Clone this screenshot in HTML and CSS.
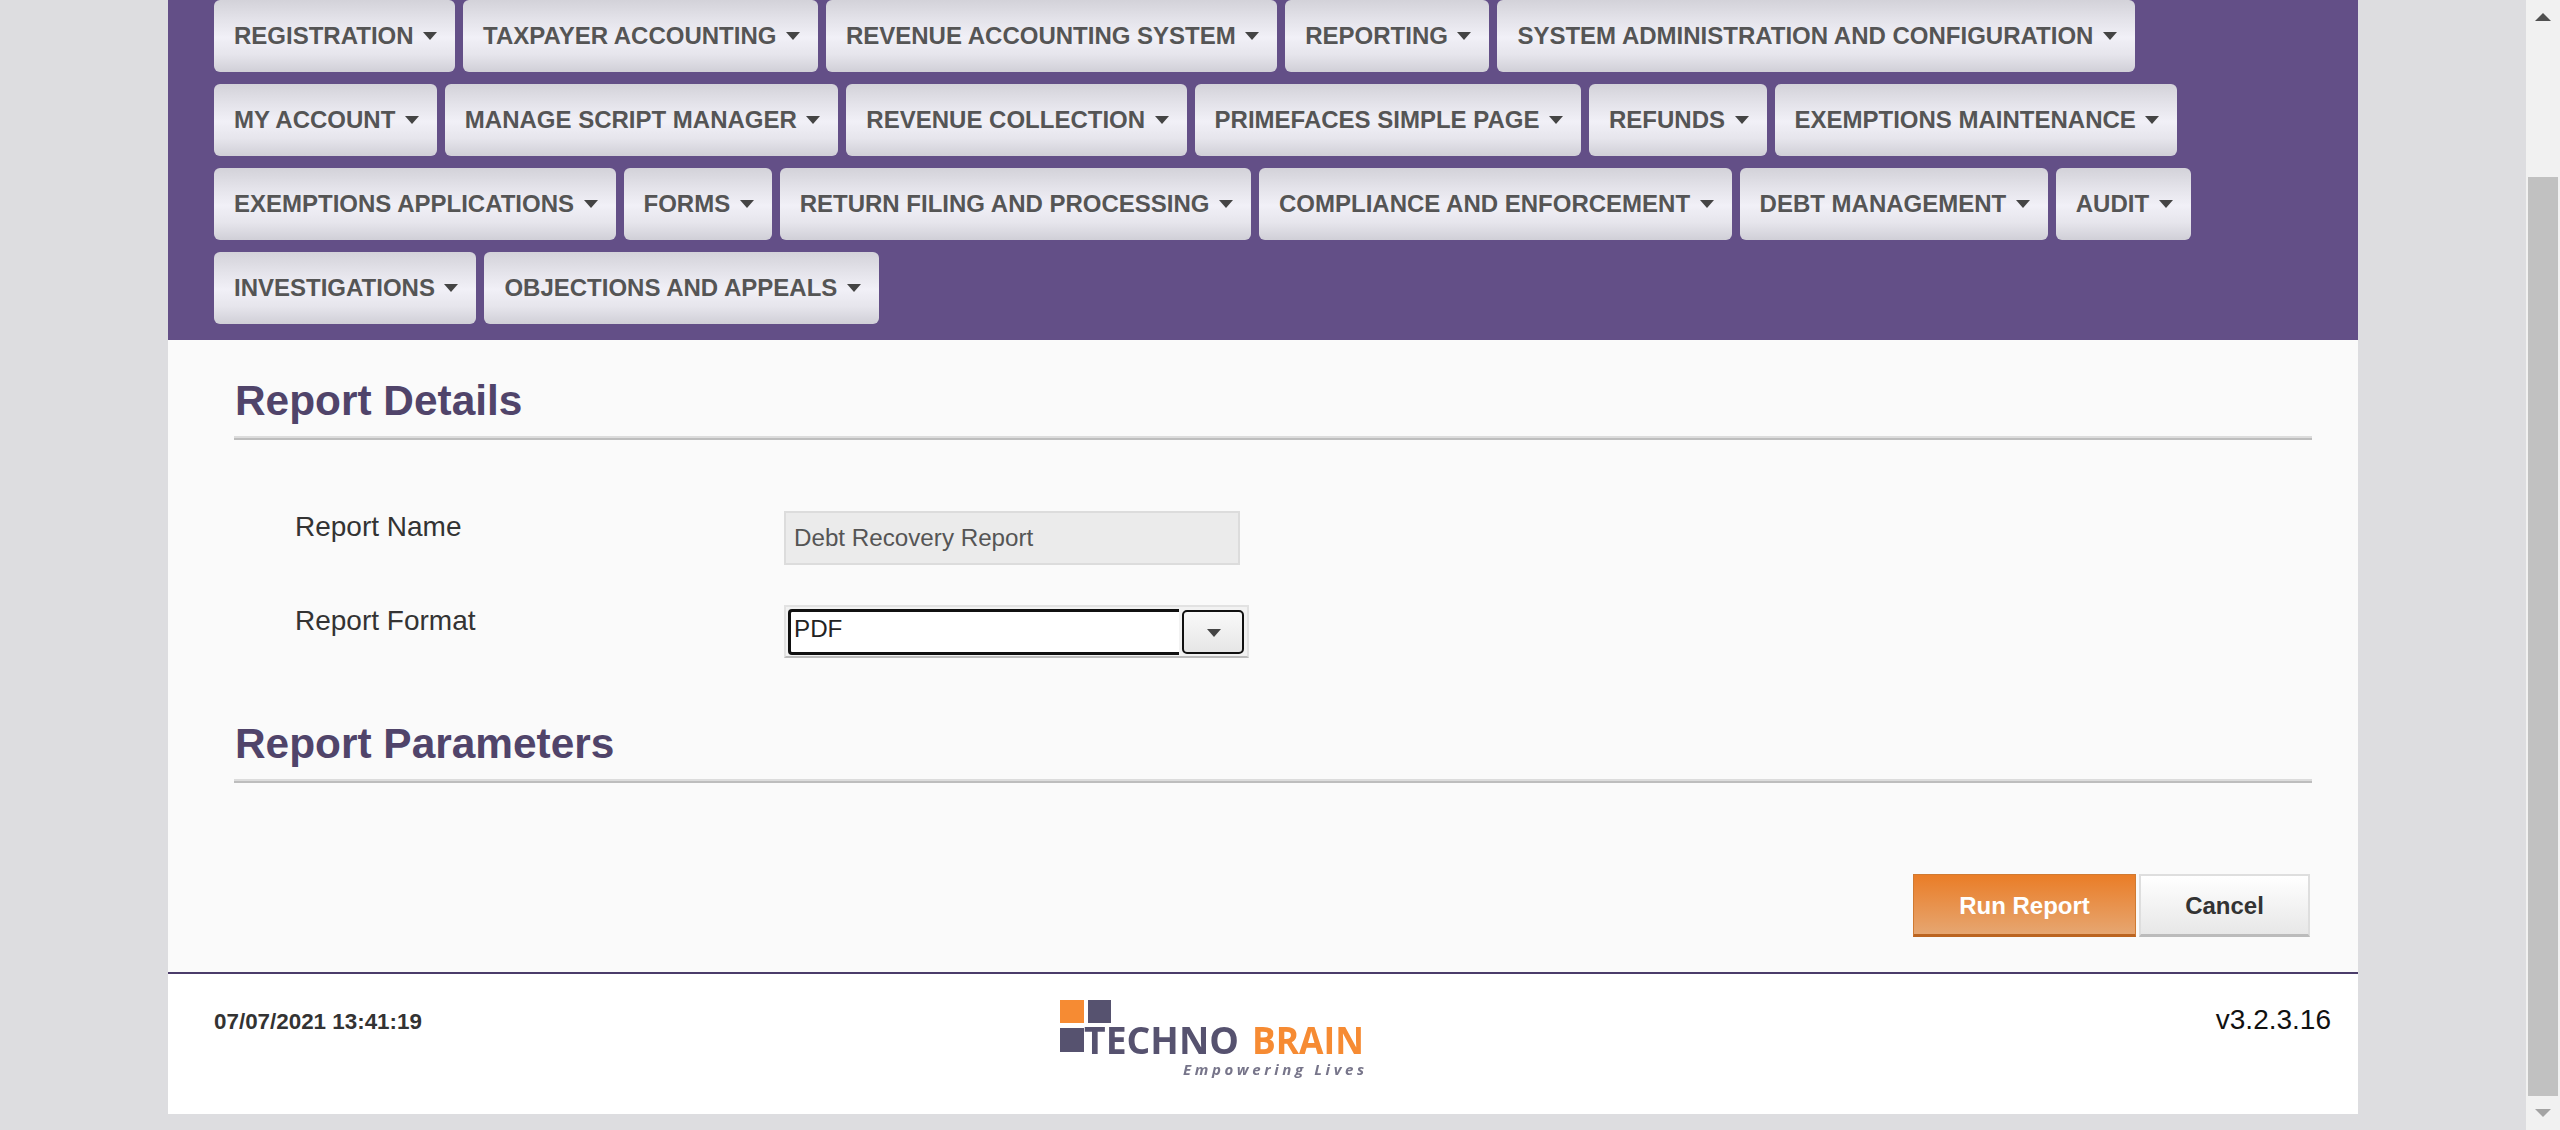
FILE: index.html
```html
<!DOCTYPE html>
<html lang="en">
<head>
    <meta charset="UTF-8">
    <title>Debt Recovery Report</title>
    <link rel="stylesheet" href="styles.css">
</head>
<body>
    <div class="viewport">
        <div class="page">
            <nav class="menu">
                <a class="menu-item">REGISTRATION<span class="caret"></span></a>
                <a class="menu-item">TAXPAYER ACCOUNTING<span class="caret"></span></a>
                <a class="menu-item">REVENUE ACCOUNTING SYSTEM<span class="caret"></span></a>
                <a class="menu-item">REPORTING<span class="caret"></span></a>
                <a class="menu-item">SYSTEM ADMINISTRATION AND CONFIGURATION<span class="caret"></span></a>
                <a class="menu-item">MY ACCOUNT<span class="caret"></span></a>
                <a class="menu-item">MANAGE SCRIPT MANAGER<span class="caret"></span></a>
                <a class="menu-item">REVENUE COLLECTION<span class="caret"></span></a>
                <a class="menu-item">PRIMEFACES SIMPLE PAGE<span class="caret"></span></a>
                <a class="menu-item">REFUNDS<span class="caret"></span></a>
                <a class="menu-item">EXEMPTIONS MAINTENANCE<span class="caret"></span></a>
                <a class="menu-item">EXEMPTIONS APPLICATIONS<span class="caret"></span></a>
                <a class="menu-item">FORMS<span class="caret"></span></a>
                <a class="menu-item">RETURN FILING AND PROCESSING<span class="caret"></span></a>
                <a class="menu-item">COMPLIANCE AND ENFORCEMENT<span class="caret"></span></a>
                <a class="menu-item">DEBT MANAGEMENT<span class="caret"></span></a>
                <a class="menu-item">AUDIT<span class="caret"></span></a>
                <a class="menu-item">INVESTIGATIONS<span class="caret"></span></a>
                <a class="menu-item">OBJECTIONS AND APPEALS<span class="caret"></span></a>
            </nav>

            <main class="content">
                <h2 class="section-title">Report Details</h2>
                <div class="form-rows">
                    <div class="form-row">
                        <label class="form-label">Report Name</label>
                        <div class="text-field">Debt Recovery Report</div>
                    </div>
                    <div class="form-row">
                        <label class="form-label">Report Format</label>
                        <div class="select">
                            <div class="select-value">PDF</div>
                            <div class="select-button"><span class="select-caret"></span></div>
                        </div>
                    </div>
                </div>

                <h2 class="section-title section-title-params">Report Parameters</h2>

                <div class="actions">
                    <button class="btn btn-primary" type="button">Run Report</button>
                    <button class="btn btn-cancel" type="button">Cancel</button>
                </div>
            </main>

            <footer class="footer">
                <div class="footer-date">07/07/2021 13:41:19</div>
                <svg class="logo" width="304" height="80" viewBox="0 0 304 80">
                    <rect x="0" y="0" width="24" height="23" fill="#f68b33"/>
                    <rect x="28" y="0" width="23" height="23" fill="#56526f"/>
                    <rect x="0" y="28" width="24" height="24" fill="#56526f"/>
                    <text class="logo-techno" x="24" y="54" textLength="155" lengthAdjust="spacingAndGlyphs">TECHNO</text>
                    <text class="logo-brain" x="192" y="54" textLength="112" lengthAdjust="spacingAndGlyphs">BRAIN</text>
                    <text class="logo-tag" x="123" y="75" textLength="181">Empowering Lives</text>
                </svg>
                <div class="footer-version">v3.2.3.16</div>
            </footer>
        </div>
    </div>

    <div class="scrollbar">
        <div class="scroll-btn"><span class="scroll-up"></span></div>
        <div class="scroll-track"><div class="scroll-thumb"></div></div>
        <div class="scroll-btn"><span class="scroll-down"></span></div>
    </div>
</body>
</html>
```

FILE: styles.css
```css
* {
    box-sizing: border-box;
}
html, body {
    height: 100%;
}
body {
    margin: 0;
    display: flex;
    height: 1130px;
    overflow: hidden;
    font-family: "Liberation Sans", Arial, sans-serif;
    background-color: #dddde0;
}
.viewport {
    flex: 1;
    min-width: 0;
}
.page {
    width: 2190px;
    margin: 0 auto;
}

/* top menu */
.menu {
    display: flex;
    flex-wrap: wrap;
    gap: 12px 8px;
    padding: 0 46px 16px;
    background-color: #634f87;
}
.menu-item {
    display: flex;
    align-items: center;
    height: 72px;
    padding: 0 18px 0 20px;
    border-radius: 6px;
    font-size: 24px;
    font-weight: bold;
    color: #555;
    background: linear-gradient(to bottom, #d3d2d9 0%, #e4e3ea 28%, #f1f0f7 52%, #e6e5ec 76%, #d0cfd7 100%);
}
.caret {
    width: 0;
    height: 0;
    margin-left: 9.5px;
    border-left: 7.5px solid transparent;
    border-right: 7.5px solid transparent;
    border-top: 8px solid #444;
}

/* report form */
.content {
    height: 632px;
    padding: 35px 46px 0 66px;
    background-color: #fafafa;
}
.section-title {
    margin: 0;
    padding: 1px 0 12px 1px;
    border-bottom: 2px solid #bdbdbd;
    box-shadow: inset 0 -2px 0 #dcdcdc;
    font-size: 42.4px;
    line-height: 50px;
    font-weight: bold;
    color: #50446a;
}
.section-title-params {
    margin-top: 60px;
}
.form-rows {
    display: flex;
    flex-direction: column;
    gap: 40px;
    margin-top: 71px;
    padding-left: 61px;
}
.form-row {
    display: grid;
    grid-template-columns: 489px auto;
    justify-content: start;
    align-items: start;
}
.form-label {
    font-size: 28px;
    line-height: 31px;
    color: #333;
}
.text-field {
    display: flex;
    align-items: center;
    width: 456px;
    height: 54px;
    padding-left: 8px;
    border: 2px solid #dcdcdc;
    background-color: #ebebeb;
    font-size: 24.2px;
    color: #555;
}
.select {
    display: flex;
    width: 465px;
    height: 53px;
    padding: 2px 3px 1px 2px;
    border: 2px solid #e2e2e2;
    border-bottom-color: #bbb;
    background-color: #f2f2f2;
}
.select-value {
    flex: 1;
    height: 46px;
    padding: 3px 0 0 3px;
    border: 3px solid #111;
    border-right: none;
    border-radius: 4px 0 0 4px;
    background-color: #fff;
    font-size: 24.2px;
    line-height: 28px;
    color: #222;
}
.select-button {
    display: flex;
    align-items: center;
    justify-content: center;
    width: 62px;
    height: 44px;
    margin: 1px 0 0 3px;
    border: 2px solid #111;
    border-radius: 5px;
    background: linear-gradient(to bottom, #f9f9f9, #e6e6e6);
}
.select-caret {
    width: 0;
    height: 0;
    margin: 2px 0 0 2px;
    border-left: 7.5px solid transparent;
    border-right: 7.5px solid transparent;
    border-top: 8px solid #444;
}
.actions {
    display: flex;
    justify-content: flex-end;
    gap: 3px;
    margin-top: 91px;
    padding-right: 2px;
}
.btn {
    height: 63px;
    padding-top: 3px;
    font-family: inherit;
    font-size: 24px;
    font-weight: bold;
}
.btn-primary {
    width: 223px;
    color: #fff;
    border: 1px solid #d07a32;
    border-bottom: 3px solid #bb6420;
    background: linear-gradient(to bottom, #ea7d27, #e6a671);
}
.btn-cancel {
    width: 171px;
    color: #333;
    border: 2px solid #dedede;
    border-bottom: 3px solid #bbb;
    background: linear-gradient(to bottom, #fff, #e7e7e7);
}

/* footer */
.footer {
    display: grid;
    grid-template-columns: 846px 304px 1fr;
    height: 142px;
    padding: 0 27px 0 46px;
    border-top: 2px solid #4b3c6a;
    background-color: #fff;
}
.footer-date {
    padding-top: 35px;
    font-size: 22.4px;
    line-height: 26px;
    font-weight: bold;
    color: #333;
}
.logo {
    margin-top: 26px;
    filter: blur(0.7px);
}
.logo-techno, .logo-brain {
    font-family: "Open Sans", sans-serif;
    font-size: 38px;
    font-weight: 700;
}
.logo-techno {
    fill: #56526f;
}
.logo-brain {
    fill: #f68b33;
}
.logo-tag {
    font-family: "Open Sans", sans-serif;
    font-size: 15px;
    font-weight: 700;
    font-style: italic;
    fill: #77758a;
}
.footer-version {
    padding-top: 30px;
    text-align: right;
    font-size: 28px;
    line-height: 32px;
    color: #111;
}

/* window scrollbar */
.scrollbar {
    display: flex;
    flex-direction: column;
    flex: none;
    width: 34px;
    height: 1130px;
    background-color: #f1f1f1;
}
.scroll-btn {
    display: flex;
    align-items: center;
    justify-content: center;
    height: 34px;
    flex: none;
}
.scroll-up, .scroll-down {
    width: 0;
    height: 0;
    border-left: 8px solid transparent;
    border-right: 8px solid transparent;
}
.scroll-up {
    border-bottom: 8px solid #505050;
}
.scroll-down {
    border-top: 8px solid #a3a3a3;
}
.scroll-track {
    flex: 1;
    padding: 143px 2px 0;
}
.scroll-thumb {
    height: 100%;
    background-color: #c1c1c1;
}
```
